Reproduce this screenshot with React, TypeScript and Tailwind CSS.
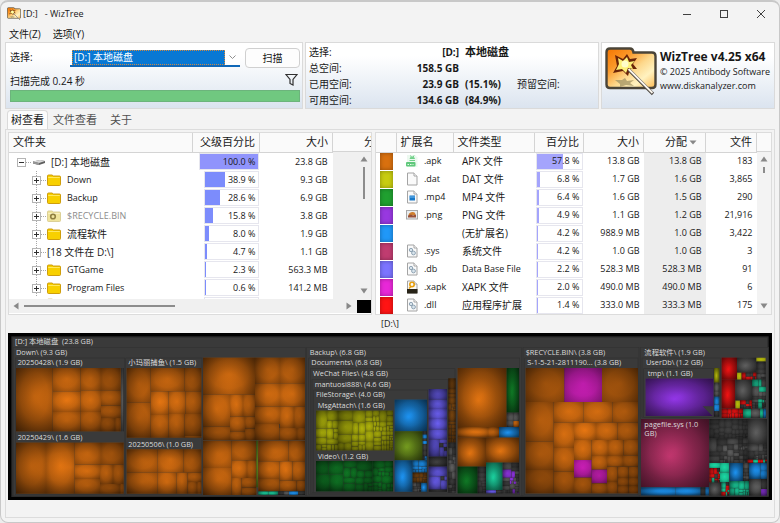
import { ReactNode } from "react";
import clsx from "clsx";

const folders = [
  { name: "Down", icon: "folder", percent: 38.9, size: "9.3 GB" },
  { name: "Backup", icon: "folder", percent: 28.6, size: "6.9 GB" },
  { name: "$RECYCLE.BIN", icon: "system", percent: 15.8, size: "3.8 GB" },
  { name: "流程软件", icon: "folder", percent: 8.0, size: "1.9 GB" },
  { name: "[18 文件在 D:\\]", icon: "none", percent: 4.7, size: "1.1 GB" },
  { name: "GTGame", icon: "folder", percent: 2.3, size: "563.3 MB" },
  { name: "Program Files", icon: "folder", percent: 0.6, size: "141.2 MB" },
];

const extensions = [
  { swatch: "bg-[#d8700f]", ext: ".apk", type: "APK 文件", percent: 57.8, size: "13.8 GB", alloc: "13.8 GB", files: "183" },
  { swatch: "bg-[#c8cc10]", ext: ".dat", type: "DAT 文件", percent: 6.8, size: "1.7 GB", alloc: "1.6 GB", files: "3,865" },
  { swatch: "bg-[#20a030]", ext: ".mp4", type: "MP4 文件", percent: 6.4, size: "1.6 GB", alloc: "1.5 GB", files: "290" },
  { swatch: "bg-[#9838e0]", ext: ".png", type: "PNG 文件", percent: 4.9, size: "1.1 GB", alloc: "1.2 GB", files: "21,916" },
  { swatch: "bg-[#2098f8]", ext: "", type: "(无扩展名)", percent: 4.2, size: "988.9 MB", alloc: "1.0 GB", files: "3,422" },
  { swatch: "bg-[#c03c70]", ext: ".sys", type: "系统文件", percent: 4.2, size: "1.0 GB", alloc: "1.0 GB", files: "3" },
  { swatch: "bg-[#7c74ff]", ext: ".db", type: "Data Base File", percent: 2.2, size: "528.3 MB", alloc: "528.3 MB", files: "91" },
  { swatch: "bg-[#e828d8]", ext: ".xapk", type: "XAPK 文件", percent: 2.0, size: "490.0 MB", alloc: "490.0 MB", files: "6" },
  { swatch: "bg-[#ff1414]", ext: ".dll", type: "应用程序扩展", percent: 1.4, size: "333.0 MB", alloc: "333.3 MB", files: "175" },
];

const colors = {
  orange: "#ea7812",
  brown: "#7a4610",
  yellow: "#b8bc0c",
  green: "#107c26",
  olive: "#78a020",
  blue: "#1e98fa",
  indigo: "#6c60f4",
  grey: "#626262",
  dark: "#444444",
  teal: "#1cd8a4",
  magenta: "#f024d8",
  violet: "#9838f0",
  rose: "#c83872",
  red: "#f81414",
};

type Color = keyof typeof colors;
type Tile = [number, number, number, number, Color?];

interface Group {
  left: number;
  color: Color;
  tiles: Tile[];
}

// Map units are a third of a pixel at the default window size
const groups: Group[] = [
  {
    left: 0,
    color: "orange",
    tiles: [
      [48, 126, 110, 190], [158, 126, 84, 70], [242, 126, 61, 67], [303, 126, 59, 67],
      [158, 196, 84, 62], [242, 193, 61, 65], [158, 258, 84, 58], [242, 258, 61, 58],
      [303, 193, 59, 46], [303, 239, 59, 37], [303, 276, 42, 40], [345, 276, 17, 40],
    ],
  },
  { left: 0, color: "grey", tiles: [[363, 126, 8, 190]] },
  {
    left: 0,
    color: "orange",
    tiles: [
      [48, 350, 90, 153], [138, 350, 86, 153], [224, 350, 79, 66], [303, 350, 68, 66],
      [224, 416, 76, 43], [224, 459, 76, 44], [300, 416, 39, 58], [339, 416, 32, 58],
      [300, 474, 60, 29], [360, 474, 11, 29],
    ],
  },
  {
    left: 0,
    color: "orange",
    tiles: [
      [380, 126, 72, 104], [380, 230, 72, 105], [452, 126, 102, 70], [554, 126, 50, 70],
      [452, 196, 54, 71], [506, 196, 50, 68], [556, 196, 48, 68], [452, 267, 54, 68],
      [506, 264, 48, 71], [554, 264, 50, 66], [554, 330, 50, 5],
    ],
  },
  {
    left: 0,
    color: "orange",
    tiles: [
      [380, 370, 92, 70], [472, 370, 79, 70], [551, 370, 53, 70], [380, 440, 92, 63],
      [472, 440, 57, 63], [529, 440, 34, 63], [563, 440, 41, 28], [563, 468, 28, 35],
      [591, 468, 13, 35],
    ],
  },
  {
    left: 600,
    color: "orange",
    tiles: [
      [9, 95, 156, 111], [9, 206, 81, 96], [90, 206, 39, 66], [129, 206, 36, 66],
      [9, 302, 81, 40], [90, 272, 45, 44], [135, 272, 30, 36], [90, 316, 45, 26],
      [135, 308, 30, 34],
    ],
  },
  {
    left: 600,
    color: "orange",
    tiles: [
      [165, 95, 75, 77], [240, 95, 75, 77], [165, 172, 75, 70], [240, 172, 75, 70],
      [165, 242, 75, 52], [240, 242, 42, 64], [282, 242, 33, 64], [165, 294, 73, 48],
      [238, 306, 53, 36], [291, 306, 24, 36],
    ],
  },
  {
    left: 600,
    color: "orange",
    tiles: [
      [9, 344, 86, 82], [95, 344, 73, 59], [9, 426, 86, 81], [95, 403, 46, 53],
      [141, 403, 28, 53], [95, 456, 30, 51], [125, 456, 44, 29], [125, 485, 44, 22],
    ],
  },
  { left: 600, color: "olive", tiles: [[169, 344, 5, 140]] },
  {
    left: 600,
    color: "orange",
    tiles: [
      [175, 344, 91, 62], [266, 344, 49, 62], [175, 406, 63, 53], [238, 406, 40, 58],
      [278, 406, 37, 58], [175, 459, 63, 37], [238, 464, 52, 32], [290, 464, 25, 32],
    ],
  },
  { left: 600, color: "teal", tiles: [[175, 496, 30, 11], [205, 496, 30, 11]] },
  { left: 600, color: "blue", tiles: [[235, 496, 16, 11, "dark"], [251, 496, 16, 11, "grey"], [267, 496, 28, 11], [295, 496, 20, 11, "dark"]] },

  { left: 1170, color: "blue", tiles: [[14, 221, 97, 95]] },
  { left: 1170, color: "olive", tiles: [[14, 316, 84, 87]] },
  { left: 1170, color: "blue", tiles: [[14, 403, 54, 94]] },
  { left: 1170, color: "blue", tiles: [[93, 470, 18, 27]] },
  {
    left: 1170,
    color: "indigo",
    tiles: [
      [116, 189, 55, 31], [116, 220, 55, 29], [116, 249, 55, 30], [116, 279, 55, 31],
      [116, 310, 55, 30], [116, 340, 32, 52], [148, 340, 23, 12], [148, 352, 12, 12, "dark"],
      [160, 352, 11, 12], [148, 364, 14, 28], [162, 364, 9, 10, "dark"], [162, 374, 9, 18],
    ],
  },
  { left: 1170, color: "dark", tiles: [[116, 392, 55, 30]] },
  {
    left: 1170,
    color: "indigo",
    tiles: [[116, 422, 55, 29], [116, 451, 36, 40], [152, 451, 11, 12, "dark"], [163, 451, 8, 12], [152, 463, 19, 28], [116, 491, 55, 6, "dark"]],
  },
  { left: 1170, color: "orange", tiles: [[203, 126, 147, 177]] },
  { left: 1170, color: "green", tiles: [[350, 126, 37, 134]] },
  { left: 1170, color: "grey", tiles: [[350, 260, 20, 25], [370, 260, 17, 25], [350, 285, 20, 18], [370, 285, 17, 18, "orange"]] },
  { left: 1170, color: "orange", tiles: [[203, 303, 91, 32], [294, 303, 33, 32]] },
  { left: 1170, color: "blue", tiles: [[327, 303, 60, 32]] },
  { left: 1170, color: "orange", tiles: [[203, 335, 85, 87]] },
  { left: 1170, color: "orange", tiles: [[288, 335, 99, 75]] },
  { left: 1170, color: "green", tiles: [[203, 422, 60, 80]] },
  { left: 1170, color: "teal", tiles: [[288, 410, 50, 82]] },
  { left: 1170, color: "indigo", tiles: [[288, 492, 30, 10], [318, 492, 20, 10, "dark"]] },
  {
    left: 1170,
    color: "orange",
    tiles: [
      [407, 126, 116, 102], [523, 126, 113, 102, "magenta"], [636, 126, 108, 102],
      [407, 228, 84, 119], [407, 347, 84, 85], [407, 432, 84, 70],
      [491, 228, 89, 62], [580, 228, 88, 62], [668, 228, 76, 62],
      [491, 290, 61, 76], [491, 366, 61, 71], [491, 437, 61, 65],
      [552, 290, 66, 52], [618, 290, 65, 52], [683, 290, 61, 52],
      [552, 342, 53, 60], [552, 402, 53, 53, "magenta"], [552, 455, 53, 47],
      [605, 342, 49, 48], [654, 342, 46, 48], [700, 342, 44, 46],
      [605, 390, 46, 41], [605, 431, 46, 41, "magenta"], [605, 472, 46, 30],
      [651, 390, 48, 32], [699, 388, 45, 34], [651, 422, 32, 46],
      [683, 422, 32, 34], [715, 422, 29, 34], [651, 468, 32, 34],
      [683, 456, 32, 24], [715, 456, 29, 24], [683, 480, 32, 22], [715, 480, 29, 22],
    ],
  },

  { left: 1740, color: "violet", tiles: [[197, 158, 203, 112]] },
  { left: 1740, color: "yellow", tiles: [[402, 126, 16, 44]] },
  { left: 1740, color: "grey", tiles: [[402, 170, 16, 26], [402, 196, 16, 16]] },
  { left: 1740, color: "blue", tiles: [[402, 212, 16, 24], [402, 236, 9, 20], [411, 236, 7, 20], [402, 256, 16, 16, "dark"]] },
  { left: 1740, color: "red", tiles: [[425, 95, 46, 66]] },
  { left: 1740, color: "red", tiles: [[425, 161, 41, 86]] },
  { left: 1740, color: "grey", tiles: [[471, 95, 58, 45]] },
  { left: 1740, color: "yellow", tiles: [[529, 95, 28, 12], [471, 140, 14, 22], [466, 223, 14, 25]] },
  { left: 1740, color: "grey", tiles: [[466, 161, 50, 62]] },
  { left: 1740, color: "teal", tiles: [[489, 248, 24, 28], [513, 248, 27, 28, "grey"], [540, 248, 10, 28], [550, 248, 8, 28, "blue"]] },
  { left: 1740, color: "rose", tiles: [[183, 279, 204, 204]] },
  { left: 1740, color: "blue", tiles: [[183, 484, 104, 24], [287, 484, 75, 24], [362, 484, 14, 24, "dark"], [376, 484, 11, 24]] },
  { left: 1740, color: "grey", tiles: [[503, 279, 58, 76]] },
  { left: 1740, color: "teal", tiles: [[388, 411, 32, 15], [420, 411, 27, 28], [420, 439, 27, 29]] },
  { left: 1740, color: "blue", tiles: [[449, 411, 40, 54]] },
  { left: 1740, color: "blue", tiles: [[507, 411, 34, 48], [541, 411, 20, 24], [541, 435, 20, 24]] },
  { left: 1740, color: "grey", tiles: [[388, 469, 36, 40]] },
  { left: 1740, color: "grey", tiles: [[507, 459, 36, 50], [543, 459, 18, 30, "dark"], [543, 489, 18, 20, "violet"]] },
];

interface Block {
  left: number;
  area: [number, number, number, number];
  count: number;
  palette: Color[];
}

// Areas with too many files to name: split into small tiles
const blocks: Block[] = [
  { left: 600, area: [348, 254, 66, 119], count: 16, palette: ["yellow"] },
  { left: 600, area: [414, 254, 165, 119], count: 60, palette: ["yellow"] },
  { left: 600, area: [348, 405, 170, 91], count: 18, palette: ["green"] },
  { left: 600, area: [518, 405, 61, 91], count: 22, palette: ["green"] },
  { left: 1170, area: [98, 316, 13, 87], count: 10, palette: ["dark", "dark", "blue"] },
  { left: 1170, area: [68, 403, 43, 37], count: 10, palette: ["blue"] },
  { left: 1170, area: [68, 440, 43, 30], count: 10, palette: ["brown"] },
  { left: 1170, area: [68, 470, 25, 27], count: 8, palette: ["dark", "grey"] },
  { left: 1170, area: [175, 157, 22, 193], count: 22, palette: ["brown"] },
  { left: 1170, area: [175, 350, 22, 150], count: 20, palette: ["grey", "dark"] },
  { left: 1170, area: [263, 422, 25, 80], count: 10, palette: ["dark"] },
  { left: 1170, area: [338, 410, 49, 92], count: 30, palette: ["grey", "dark", "violet", "grey"] },
  { left: 1740, area: [529, 107, 28, 54], count: 6, palette: ["dark", "grey"] },
  { left: 1740, area: [485, 140, 44, 21], count: 8, palette: ["red", "dark", "red"] },
  { left: 1740, area: [516, 161, 42, 86], count: 24, palette: ["dark", "grey", "teal", "dark", "grey", "dark"] },
  { left: 1740, area: [480, 223, 36, 25], count: 10, palette: ["red", "dark"] },
  { left: 1740, area: [425, 248, 64, 28], count: 14, palette: ["red"] },
  { left: 1740, area: [388, 279, 115, 59], count: 34, palette: ["dark"] },
  { left: 1740, area: [388, 338, 115, 72], count: 40, palette: ["grey", "dark"] },
  { left: 1740, area: [503, 355, 58, 46], count: 14, palette: ["dark", "grey"] },
  { left: 1740, area: [503, 401, 58, 10], count: 10, palette: ["red", "dark", "teal"] },
  { left: 1740, area: [388, 426, 32, 43], count: 18, palette: ["red", "red", "dark", "teal"] },
  { left: 1740, area: [489, 411, 18, 54], count: 8, palette: ["dark", "grey"] },
  { left: 1740, area: [424, 469, 24, 40], count: 12, palette: ["red", "teal", "dark"] },
  { left: 1740, area: [449, 465, 58, 43], count: 12, palette: ["teal"] },
];

const labels: [number, number, string][] = [
  [45, 55, "[D:] 本地磁盘  (23.8 GB)"],
  [48, 87, "Down\\ (9.3 GB)"],
  [53, 118, "20250428\\ (1.9 GB)"],
  [53, 342, "20250429\\ (1.6 GB)"],
  [385, 118, "小玛丽捕鱼\\ (1.5 GB)"],
  [385, 362, "20250506\\ (1.0 GB)"],
  [929, 87, "Backup\\ (6.8 GB)"],
  [934, 118, "Documents\\ (6.8 GB)"],
  [939, 150, "WeChat Files\\ (4.8 GB)"],
  [944, 182, "mantuosi888\\ (4.6 GB)"],
  [948, 214, "FileStorage\\ (4.0 GB)"],
  [953, 246, "MsgAttach\\ (1.6 GB)"],
  [953, 399, "Video\\ (1.2 GB)"],
  [1577, 87, "$RECYCLE.BIN\\ (3.8 GB)"],
  [1582, 118, "S-1-5-21-2811190... (3.8 GB)"],
  [1933, 87, "流程软件\\ (1.9 GB)"],
  [1938, 118, "UserDb\\ (1.2 GB)"],
  [1943, 150, "tmp\\ (1.1 GB)"],
  [1933, 302, "pagefile.sys (1.0"],
  [1933, 331, "GB)"],
];

const frames: [number, number, number, number][] = [
  [40, 64, 876, 446],
  [46, 96, 328, 410],
  [377, 96, 229, 410],
  [920, 64, 644, 446],
  [926, 96, 633, 410],
  [931, 128, 434, 374],
  [936, 160, 408, 340],
  [941, 192, 342, 308],
  [1569, 64, 348, 446],
  [1574, 96, 340, 410],
  [1921, 64, 384, 446],
  [1926, 96, 235, 178],
  [1931, 128, 210, 146],
];

function splitBlock({ left, area, count, palette }: Block): Group {
  let seed = area[0] * 31 + area[1] * 17 + count;
  const random = () => {
    seed = (seed * 16807) % 2147483647;
    return seed / 2147483647;
  };
  const tiles: Tile[] = [];

  const split = (x: number, y: number, w: number, h: number, n: number) => {
    if (n <= 1 || (w < 6 && h < 6)) {
      tiles.push([x, y, w, h, palette[Math.floor(random() * palette.length)]]);
      return;
    }
    const first = Math.max(1, Math.floor(n * (0.25 + random() * 0.3)));
    const share = 0.4 + random() * 0.2;
    if (w > h) {
      split(x, y, w * share, h, first);
      split(x + w * share, y, w * (1 - share), h, n - first);
    } else {
      split(x, y, w, h * share, first);
      split(x, y + h * share, w, h * (1 - share), n - first);
    }
  };

  random();
  split(...area, count);
  return { left, color: palette[0], tiles };
}

function TileGroup({ group }: { group: Group }) {
  const { left, color, tiles } = group;
  const x = Math.min(...tiles.map((t) => t[0]));
  const y = Math.min(...tiles.map((t) => t[1]));
  const right = Math.max(...tiles.map((t) => t[0] + t[2]));
  const bottom = Math.max(...tiles.map((t) => t[1] + t[3]));
  // Mixed rows may leave gaps, so only shade when the tiles fill the box
  const filled = tiles.reduce((sum, t) => sum + t[2] * t[3], 0) / ((right - x) * (bottom - y));

  return (
    <g transform={`translate(${left} 0)`}>
      {tiles.map(([tx, ty, w, h, own], i) => (
        <rect key={i} x={tx} y={ty} width={w} height={h} fill={`url(#tile-${own ?? color})`} />
      ))}
      {filled > 0.95 && (
        <rect x={x} y={y} width={right - x} height={bottom - y} fill={tiles.length === 1 ? "url(#cushion)" : "url(#shade)"} />
      )}
    </g>
  );
}

function TreeMap() {
  return (
    <svg viewBox="24 21 2292 501" className="block w-full" role="img" aria-label="[D:\]">
      <defs>
        {Object.entries(colors).map(([name, color]) => (
          <radialGradient key={name} id={`tile-${name}`} cx="0.5" cy="0.45" r="0.75">
            <stop offset="0" stopColor={color} />
            <stop offset="0.5" stopColor={`color-mix(in srgb, ${color} 88%, black)`} />
            <stop offset="1" stopColor={`color-mix(in srgb, ${color} 58%, black)`} />
          </radialGradient>
        ))}
        <radialGradient id="shade" cx="0.5" cy="0.48" r="0.72">
          <stop offset="0" stopColor="#000" stopOpacity="0" />
          <stop offset="0.4" stopColor="#000" stopOpacity="0.14" />
          <stop offset="1" stopColor="#000" stopOpacity="0.56" />
        </radialGradient>
        <radialGradient id="cushion" cx="0.42" cy="0.55" r="0.75">
          <stop offset="0" stopColor="#000" stopOpacity="0" />
          <stop offset="0.5" stopColor="#000" stopOpacity="0.28" />
          <stop offset="1" stopColor="#000" stopOpacity="0.5" />
        </radialGradient>
      </defs>
      <rect x="24" y="21" width="2292" height="501" fill="#000" />
      <rect x="34" y="31" width="2272" height="482" fill="#2c2c2c" />
      <rect x="38" y="35" width="2264" height="474" fill="#3a3a3a" />
      {frames.map(([x, y, w, h], i) => (
        <rect key={i} x={x} y={y} width={w} height={h} fill="#3a3a3a" stroke="#323232" strokeWidth="2" />
      ))}
      {groups.map((group, i) => (
        <TileGroup key={i} group={group} />
      ))}
      {blocks.map((block, i) => (
        <TileGroup key={i} group={splitBlock(block)} />
      ))}
      <path d="M2108 241h32v31z" fill="#3a3a3a" />
      <g fill="#dadada" fontSize="22">
        {labels.map(([x, y, text]) => (
          <text key={`${x}-${y}`} x={x} y={y} xmlSpace="preserve">
            {text}
          </text>
        ))}
      </g>
    </svg>
  );
}

function WizardFolder({ className }: { className: string }) {
  return (
    <svg viewBox="0 0 52 50" className={className} aria-hidden="true">
      <defs>
        <linearGradient id="wiz-folder" x1="0" y1="0" x2="1" y2="1">
          <stop offset="0" stopColor="#f47400" />
          <stop offset="0.3" stopColor="#fb9828" />
          <stop offset="0.55" stopColor="#fdd88c" />
          <stop offset="0.75" stopColor="#fff2c0" />
          <stop offset="1" stopColor="#fbb850" />
        </linearGradient>
      </defs>
      <path d="M5 1.500h20q3 0 3.500 4h18.500q3.500 0 3.500 3.500v28.500q0 3.500-3.500 3.500h-42q-3.500 0-3.500-3.500v-32.500q0-3.500 3.500-3.500z" fill="url(#wiz-folder)" stroke="#4a4438" strokeWidth="2.400" />
      <path d="M10 33l7 0 3-2 2 3 7-1-4 3 4 3-8-1-6 2 0-3z" fill="#a89868" opacity="0.8" />
      <path d="M10 8l8 4 4-5 3 5 7-1-4 6 4 5-7 0-2 7-5-5-10 2 4-7z" fill="#6a2408" />
      <path d="M13 11l5 3 4-4 2 5 6-1-4 4 2 4-5-1-2 5-4-4-6 1 3-6z" fill="#fdf078" />
      <circle cx="20" cy="17" r="3.500" fill="#fffcc8" />
      <path d="M24 23L48 47" stroke="#4c4640" strokeWidth="3.200" />
      <path d="M23.500 22L47.500 46" stroke="#fbf6ee" strokeWidth="1.800" />
    </svg>
  );
}

function FolderIcon({ kind }: { kind: string }) {
  if (kind === "none") return null;
  const system = kind === "system";
  return (
    <svg viewBox="0 0 14 12" className="mr-1.5 h-3 w-3.5 shrink-0" aria-hidden="true">
      <path d="M.5 2q0-1 1-1h3.500l1.500 1h6q1 0 1 1v7.500q0 1-1 1h-11q-1 0-1-1z" fill={system ? "#f0e49c" : "#f8d000"} stroke={system ? "#d8cc90" : "#c89400"} strokeWidth="0.900" />
      <path d="M1.200 3.500h11.600" stroke={system ? "#f8f0c0" : "#ffe860"} strokeWidth="1" />
      {system && <circle cx="6" cy="6.500" r="2.300" fill="none" stroke="#908040" strokeWidth="1.600" />}
    </svg>
  );
}

function DriveIcon() {
  return (
    <svg viewBox="0 0 14 10" className="mr-[5px] h-2.5 w-3.5 shrink-0" aria-hidden="true">
      <path d="M1 4.500l7-1.500 5 1v2l-6 2-6-1.500z" fill="#606060" />
      <path d="M1 4.500l7-1.500 5 1-6 2z" fill="#d8d8d8" />
      <path d="M7 6v2l-6-1.500v-2z" fill="#989898" />
    </svg>
  );
}

function Expander({ open, label }: { open?: boolean; label: string }) {
  return (
    <button type="button" aria-label={label} aria-expanded={!!open} className="mr-px h-[18px] w-[22px] shrink-0">
      <svg viewBox="0 0 22 18" className="block h-full w-full" shapeRendering="crispEdges">
        {!open && <path d="M12.500 0v18" stroke="#a8a8a8" strokeDasharray="1 1" />}
        <path d="M17 9.500h5" stroke="#a8a8a8" strokeDasharray="1 1" />
        <rect x="8.500" y="5.500" width="8" height="8" fill="#fff" stroke="#b4b4b4" />
        <path d={open ? "M10 9.500h5" : "M10 9.500h5M12.500 7v5"} stroke="#303030" />
      </svg>
    </button>
  );
}

function FileIcon({ ext }: { ext: string }) {
  if (!ext) return <span className="w-3 shrink-0" />;
  if (ext === ".apk") {
    return (
      <svg viewBox="0 0 12 14" className="h-3.5 w-3 shrink-0" aria-hidden="true">
        <path d="M1 1h8l2.500 2.500V13H1z" fill="#ecf9ef" />
        <path d="M4 4.500a2.300 2 0 014.500 0zM4.500 1.500l.8 1.500M8 1.500l-.8 1.500M3.500 6.500h5.500" stroke="#70d088" fill="#70d088" />
        <rect x="0" y="8" width="9.500" height="4.500" rx="1" fill="#60c87c" />
        <path d="M1.500 10.500h1.500M4 10.500h1.500M6.500 10.500h1" stroke="#e8ffe8" strokeWidth="1.200" />
      </svg>
    );
  }
  if (ext === ".png") {
    return (
      <svg viewBox="0 0 12 14" className="h-3.5 w-3 shrink-0" aria-hidden="true">
        <rect x=".5" y="2.500" width="11" height="8.500" fill="#e8ecf0" stroke="#a8a8a8" />
        <path d="M2.500 7.500q0-3 3.500-3.500t3.500 3z" fill="#d08030" />
        <path d="M2 9.500V7.500l3-1 2 1 3-1v3z" fill="#985038" />
      </svg>
    );
  }
  return (
    <svg viewBox="0 0 12 14" className="h-3.5 w-3 shrink-0" aria-hidden="true">
      <path d="M1.500 1h6.500l3 3v9h-9.500z" fill="#fafafa" stroke="#a4a4a4" />
      <path d="M8 1v3h3" fill="#fff" stroke="#a4a4a4" />
      {ext === ".mp4" && <path d="M3.500 5.500h5.500v5h-5.500z" fill="#1878c8" />}
      {ext === ".mp4" && <path d="M3.500 7h5.500" stroke="#70b8f0" />}
      {ext === ".xapk" && (
        <>
          <rect x="1" y="9" width="10.500" height="4.500" fill="#282418" />
          <circle cx="6" cy="4.500" r="2.200" fill="none" stroke="#e8a010" strokeWidth="1.600" />
          <path d="M3 8.500l2-2" stroke="#e8a010" strokeWidth="1.500" />
        </>
      )}
      {[".sys", ".db", ".dll"].includes(ext) && (
        <>
          <circle cx="5" cy="6" r="1.700" fill="#d8e4ec" stroke="#90a4b4" />
          <circle cx="7.500" cy="9" r="1.900" fill="#d8e4ec" stroke="#90a4b4" />
        </>
      )}
    </svg>
  );
}

function PercentCell({ percent, root, light }: { percent: number; root?: boolean; light?: boolean }) {
  return (
    <td className={clsx("p-0 pr-px", light ? "pl-px" : root ? "pl-1.5" : "pl-[11px]")}>
      <div className="grid h-[17px] items-center border border-[#e6e6ee] text-right">
        <div
          className={clsx("col-start-1 row-start-1 h-full", root ? "bg-[#9094fc]" : light ? "bg-[#a4a4fc]" : "bg-[#7c8cfc]")}
          style={{ width: `${percent}%` }}
        />
        <span className="col-start-1 row-start-1 pr-0.5">{percent.toFixed(1)} %</span>
      </div>
    </td>
  );
}

function Arrow({ dir }: { dir: "up" | "down" | "left" | "right" }) {
  const paths = { up: "M.5 6.500h7l-3.500-5z", down: "M.5 1.500h7l-3.500 5z", left: "M6.500 .5v7l-5-3.500z", right: "M1.500 .5v7l5-3.500z" };
  return (
    <svg viewBox="0 0 8 8" className="h-2 w-2 shrink-0" aria-hidden="true">
      <path d={paths[dir]} fill="#888" />
    </svg>
  );
}

function Th({ children, className }: { children?: ReactNode; className?: string }) {
  return (
    <th className={clsx("h-[19px] border-r border-b border-[#d4d4d4] bg-[#fafafa] px-1 text-[11px] leading-4 font-normal", className)}>
      {children}
    </th>
  );
}

function FolderPane() {
  return (
    <div className="flex min-w-0 flex-col border border-[#dcdcdc] bg-white">
      <div className="flex h-[166px] overflow-hidden">
        <div className="min-w-0 flex-1">
          <table className="w-full table-fixed border-collapse text-[9px] leading-3">
            <colgroup>
              <col />
              <col className="w-[67px]" />
              <col className="w-[73px]" />
            </colgroup>
            <thead>
              <tr>
                <Th className="text-left">文件夹</Th>
                <Th className="text-right">父级百分比</Th>
                <Th className="text-right">大小</Th>
              </tr>
            </thead>
            <tbody>
              <tr className="h-[18px]">
                <td className="p-0">
                  <div className="flex items-center text-[10px]">
                    <Expander open label="[D:]" />
                    <DriveIcon />
                    [D:] 本地磁盘
                  </div>
                </td>
                <PercentCell percent={100} root />
                <td className="p-0 pr-[5px] text-right">23.8 GB</td>
              </tr>
              {folders.map((f) => (
                <tr key={f.name} className="h-[18px]">
                  <td className="p-0 pl-[15px]">
                    <div className={clsx("flex items-center", /^[\x20-\x7e]+$/.test(f.name) ? "text-[9px]" : "text-[10px]", f.icon === "system" && "text-[#8c8c8c]")}>
                      <Expander label={f.name} />
                      <FolderIcon kind={f.icon} />
                      {f.name}
                    </div>
                  </td>
                  <PercentCell percent={f.percent} />
                  <td className="p-0 pr-[5px] text-right">{f.size}</td>
                </tr>
              ))}
              <tr className="h-[18px]">
                <td className="p-0 pl-[37px] align-top">
                  <div className="ml-px h-3 pt-px">
                    <FolderIcon kind="system" />
                  </div>
                </td>
                <td className="p-0 pr-px pl-[11px]">
                  <div className="h-[17px] border border-[#e6e6ee]" />
                </td>
                <td className="p-0" />
              </tr>
            </tbody>
          </table>
        </div>
        <div className="flex w-[38px] flex-col bg-[#f0f0f0]">
          <div className="h-[19px] overflow-hidden border-b border-[#d4d4d4] bg-[#fafafa] pl-[31px] text-[11px] leading-[18px] whitespace-nowrap">分</div>
          <div className="flex flex-1 flex-col items-center pt-[3px] pb-1 pl-6">
            <Arrow dir="up" />
            <div className="mt-1 h-8 w-0.5 bg-[#8c8c8c]" />
            <span className="flex-1" />
            <Arrow dir="down" />
          </div>
        </div>
      </div>
      <div className="flex h-[14px] items-center bg-[#f0f0f0] pl-[3px]">
        <Arrow dir="left" />
        <div className="ml-1 h-0.5 w-[42%] bg-[#8c8c8c]" />
        <span className="flex-1" />
        <Arrow dir="right" />
        <div className="ml-1 h-[13px] w-[14px] bg-black" />
      </div>
    </div>
  );
}

function ExtensionPane() {
  return (
    <div className="flex min-w-0 border border-[#dcdcdc] bg-white">
      <div className="min-w-0 flex-1">
        <table className="w-full table-fixed border-collapse text-[9px] leading-3">
          <colgroup>
            <col className="w-5" />
            <col className="w-[57px]" />
            <col />
            <col className="w-[49px]" />
            <col className="w-[60px]" />
            <col className="w-[62px]" />
            <col className="w-[51px]" />
          </colgroup>
          <thead>
            <tr>
              <Th />
              <Th className="text-left">扩展名</Th>
              <Th className="text-left">文件类型</Th>
              <Th className="text-right">百分比</Th>
              <Th className="text-right">大小</Th>
              <Th>
                <span className="flex items-center justify-end gap-0.5 pr-1">
                  分配
                  <svg viewBox="0 0 8 8" className="h-2 w-2" aria-hidden="true">
                    <path d="M0.500 2.500h7l-3.500 4z" fill="#888" />
                  </svg>
                </span>
              </Th>
              <Th className="text-right">文件</Th>
            </tr>
          </thead>
          <tbody>
            {extensions.map((e) => (
              <tr key={e.type} className="h-[18px]">
                <td className="p-0 pl-1">
                  <div className={clsx("h-[17px] w-[13px] shadow-[inset_0_0_4px_rgba(0,0,0,0.35)]", e.swatch)} />
                </td>
                <td className="p-0 pl-2.5">
                  <div className="flex items-center gap-1.5">
                    <FileIcon ext={e.ext} />
                    {e.ext}
                  </div>
                </td>
                <td className={clsx("overflow-hidden p-0 pl-[9px] whitespace-nowrap", e.ext === ".db" ? "text-[9px]" : "text-[10px]")}>{e.type}</td>
                <PercentCell percent={e.percent} light />
                <td className="p-0 pr-1 text-right">{e.size}</td>
                <td className="bg-[#ededed] p-0 pr-1 text-right">{e.alloc}</td>
                <td className="p-0 pr-1 text-right">{e.files}</td>
              </tr>
            ))}
          </tbody>
        </table>
      </div>
      <div className="flex w-[14px] flex-col bg-[#f3f3f3]">
        <div className="h-[19px] border-b border-[#d4d4d4] bg-[#fafafa]" />
        <div className="flex flex-1 flex-col items-center pt-[3px] pb-1">
          <Arrow dir="up" />
          <div className="mt-1 h-1.5 w-0.5 bg-[#8c8c8c]" />
          <span className="flex-1" />
          <Arrow dir="down" />
        </div>
      </div>
    </div>
  );
}

function TitleBar() {
  return (
    <header className="flex h-6 items-center pl-1.5">
      <WizardFolder className="h-3.5 w-3.5" />
      <h1 className="ml-0.5 text-[9px] leading-4 whitespace-pre">[D:]{"   "}- WizTree</h1>
      <div className="ml-auto flex">
        <button type="button" aria-label="最小化" className="flex h-6 w-[37px] items-center justify-center">
          <svg viewBox="0 0 10 10" className="h-2.5 w-2.5" stroke="#404040">
            <path d="M1 5.500h8" />
          </svg>
        </button>
        <button type="button" aria-label="最大化" className="flex h-6 w-[37px] items-center justify-center">
          <svg viewBox="0 0 10 10" className="h-2.5 w-2.5" stroke="#404040" fill="none">
            <rect x="1.500" y="1.500" width="7" height="7" />
          </svg>
        </button>
        <button type="button" aria-label="关闭" className="flex h-6 w-[37px] items-center justify-center">
          <svg viewBox="0 0 10 10" className="h-2.5 w-2.5" stroke="#404040">
            <path d="M1 1l8 8M9 1l-8 8" />
          </svg>
        </button>
      </div>
    </header>
  );
}

function Summary() {
  return (
    <section className="grid grid-cols-[298fr_294fr_174px] gap-0.5 px-1">
      <div className="flex h-[67px] flex-col border border-[#dadada] bg-linear-to-b from-white from-20% to-[#dbe4ef] pr-0.5 pl-1">
        <div className="mt-[5px] flex h-[19px] items-center">
          <label htmlFor="drive" className="w-[60px] text-[10px]">
            选择:
          </label>
          <div className="flex h-[19px] flex-1 items-center border-b-2 border-[#1068b8] bg-white pt-0.5 pb-px pl-0.5">
            <select id="drive" className="h-[15px] flex-1 appearance-none border border-dotted border-[#d08840] bg-[#0878d4] pl-px text-[10px] leading-3 text-white outline-none">
              <option>[D:] 本地磁盘</option>
            </select>
            <svg viewBox="0 0 14 10" className="h-2.5 w-[15px]" fill="none" stroke="#909090" aria-hidden="true">
              <path d="M4 3.500l3 3 3-3" />
            </svg>
          </div>
          <button type="button" className="ml-[5px] h-5 w-[55px] rounded-sm border border-[#d0d0d0] bg-[#fdfdfd] text-[10px] leading-4">
            扫描
          </button>
        </div>
        <div className="mt-1.5 flex h-[17px] items-center justify-between text-[10px]">
          <span>扫描完成 0.24 秒</span>
          <button type="button" aria-label="过滤" className="mr-0.5 mb-1">
            <svg viewBox="0 0 13 13" className="h-[13px] w-[13px]" fill="none" stroke="#303030" strokeWidth="1.200">
              <path d="M1 1.500h11l-4 5v5.500l-3-1.500v-4z" />
            </svg>
          </button>
        </div>
        <progress
          value={100}
          max={100}
          aria-label="扫描完成"
          className="block h-3 w-full appearance-none border border-[#6cb47c] [&::-webkit-progress-bar]:bg-white [&::-webkit-progress-value]:bg-[#70c880]"
        />
      </div>
      <div className="h-[67px] border border-[#dadada] bg-linear-to-b from-white from-20% to-[#dbe4ef] pt-px pl-[3px] text-[10px]">
        <dl className="grid grid-cols-[90px_60px_58px_auto] leading-4">
          <dt className="col-start-1">选择:</dt>
          <dd className="text-right font-bold">[D:]</dd>
          <dd className="pl-1.5 text-[11px] font-bold">本地磁盘</dd>
          <dt className="col-start-1">总空间:</dt>
          <dd className="text-right font-bold">158.5 GB</dd>
          <dt className="col-start-1">已用空间:</dt>
          <dd className="text-right font-bold">23.9 GB</dd>
          <dd className="pl-1.5 font-bold">(15.1%)</dd>
          <dt>预留空间:</dt>
          <dt className="col-start-1">可用空间:</dt>
          <dd className="text-right font-bold">134.6 GB</dd>
          <dd className="pl-1.5 font-bold">(84.9%)</dd>
        </dl>
      </div>
      <div className="flex h-[67px] gap-[3px] border border-[#dadada] bg-linear-to-b from-white from-20% to-[#dbe4ef] pt-1 pl-[3px]">
        <WizardFolder className="h-[50px] w-[52px] shrink-0" />
        <div className="pt-px text-[9px] leading-[14px] whitespace-nowrap">
          <h2 className="text-[12px] leading-[17px] font-bold">WizTree v4.25 x64</h2>
          <p>© 2025 Antibody Software</p>
          <a href="#site">www.diskanalyzer.com</a>
        </div>
      </div>
    </section>
  );
}

export default function App() {
  return (
    <div className="bg-[#ececec]">
      <div className="flex min-h-screen flex-col rounded-lg border border-t-2 border-[#c8c8c8] bg-[#f3f3f3] font-['Open_Sans','Noto_Sans_CJK_SC',sans-serif] text-[#181818]">
        <TitleBar />
        <nav className="flex h-4 items-center gap-3 pl-2 text-[10px] leading-3">
          <button type="button">文件(Z)</button>
          <button type="button">选项(Y)</button>
        </nav>
        <Summary />
        <div role="tablist" className="flex h-5 items-end pl-1.5 text-[11px] leading-4 text-[#505050]">
          <button type="button" role="tab" aria-selected="true" className="h-[19px] rounded-t-sm border border-b-0 border-[#dadada] bg-[#fcfcfc] px-[3px] text-[#181818]">
            树查看
          </button>
          <button type="button" role="tab" aria-selected="false" className="h-[18px] px-[5px]">
            文件查看
          </button>
          <button type="button" role="tab" aria-selected="false" className="h-[18px] px-2">
            关于
          </button>
        </div>
        <main className="mx-1 mb-1 flex-1 border border-[#dcdcdc] px-0.5 pt-0.5">
          <div className="grid grid-cols-[364fr_397fr] gap-[3px]">
            <FolderPane />
            <ExtensionPane />
          </div>
          <p className="py-0.5 text-center text-[9px] leading-[14px]">[D:\]</p>
          <TreeMap />
        </main>
      </div>
    </div>
  );
}
